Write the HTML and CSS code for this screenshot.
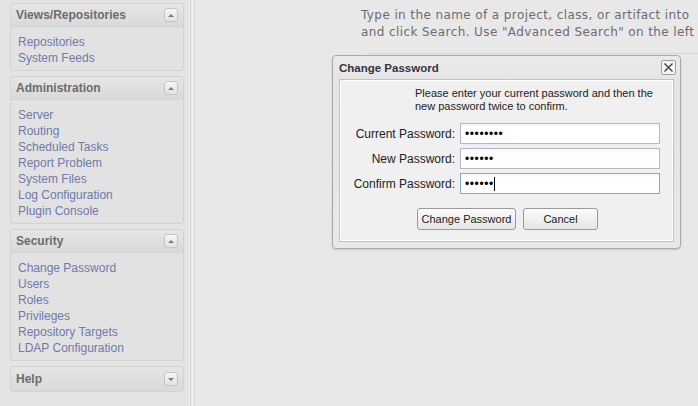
FILE: index.html
```html
<!DOCTYPE html>
<html>
<head>
<meta charset="utf-8">
<link rel="stylesheet" href="styles.css">
</head>
<body>
<div class="page">
  <aside class="sidebar">
    <section class="panel">
      <div class="panel-head"><span class="panel-title">Views/Repositories</span><span class="tool up"></span></div>
      <ul class="panel-body">
        <li><a>Repositories</a></li>
        <li><a>System Feeds</a></li>
      </ul>
    </section>
    <section class="panel">
      <div class="panel-head"><span class="panel-title">Administration</span><span class="tool up"></span></div>
      <ul class="panel-body">
        <li><a>Server</a></li>
        <li><a>Routing</a></li>
        <li><a>Scheduled Tasks</a></li>
        <li><a>Report Problem</a></li>
        <li><a>System Files</a></li>
        <li><a>Log Configuration</a></li>
        <li><a>Plugin Console</a></li>
      </ul>
    </section>
    <section class="panel">
      <div class="panel-head"><span class="panel-title">Security</span><span class="tool up"></span></div>
      <ul class="panel-body">
        <li><a>Change Password</a></li>
        <li><a>Users</a></li>
        <li><a>Roles</a></li>
        <li><a>Privileges</a></li>
        <li><a>Repository Targets</a></li>
        <li><a>LDAP Configuration</a></li>
      </ul>
    </section>
    <section class="panel collapsed">
      <div class="panel-head"><span class="panel-title">Help</span><span class="tool down"></span></div>
    </section>
  </aside>
  <main class="main">
    <p class="intro">Type in the name of a project, class, or artifact into<br>and click Search. Use "Advanced Search" on the left f</p>
    <div class="search-box"></div>
  </main>
</div>

<div class="dialog">
  <div class="dialog-head">
    <span class="dialog-title">Change Password</span>
    <span class="close">
      <svg width="11" height="11" viewBox="0 0 11 11"><path d="M1.5 1.5 L9.5 9.5 M9.5 1.5 L1.5 9.5" stroke="#444" stroke-width="1.4" fill="none"/></svg>
    </span>
  </div>
  <div class="dialog-body">
    <p class="msg">Please enter your current password and then the<br>new password twice to confirm.</p>
    <div class="form">
      <label class="lbl">Current Password:</label>
      <div class="field"><input type="password" value="12345678" readonly></div>
      <label class="lbl">New Password:</label>
      <div class="field"><input type="password" value="123456" readonly></div>
      <label class="lbl">Confirm Password:</label>
      <div class="field focus"><input type="password" value="123456" readonly><span class="caret"></span></div>
    </div>
    <div class="buttons">
      <button class="btn wide">Change Password</button>
      <button class="btn">Cancel</button>
    </div>
  </div>
</div>
</body>
</html>
```

FILE: styles.css
```css
html, body {
  margin: 0;
  padding: 0;
  height: 100%;
}
body {
  background: #e8e8e8;
  font-family: "Liberation Sans", Arial, sans-serif;
  overflow: hidden;
}
.page {
  display: flex;
  height: 406px;
}
.sidebar {
  flex: 0 0 179px;
  padding: 3px 0 0 10px;
  display: flex;
  flex-direction: column;
  gap: 5px;
  background: #e4e4e4;
  border-right: 1px solid #f2f2f2;
  box-shadow: 1px 0 0 #d2d2d2, 4px 0 0 #ececec, 5px 0 0 #d8d8d8;
  margin-right: 5px;
}
.panel {
  width: 172px;
  border: 1px solid #d2d2d2;
  border-radius: 3px;
  background: #e2e2e2;
}
.panel-head {
  height: 22px;
  border-bottom: 1px solid #d4d4d4;
  background: linear-gradient(#e6e6e6, #d9d9d9);
  display: flex;
  align-items: center;
  justify-content: space-between;
  padding: 0 5px 0 5px;
  border-radius: 3px 3px 0 0;
}
.collapsed .panel-head {
  border-bottom: none;
  height: 24px;
}
.panel-title {
  font-weight: bold;
  font-size: 12px;
  color: #6c6c6c;
}
.tool {
  width: 12px;
  height: 12px;
  border: 1px solid #c4c4c4;
  border-radius: 3px;
  background: linear-gradient(#f6f6f6, #e2e2e2);
  display: flex;
  align-items: center;
  justify-content: center;
}
.tool::after {
  content: "";
  width: 0;
  height: 0;
  border-left: 3px solid transparent;
  border-right: 3px solid transparent;
}
.tool.up::after {
  border-bottom: 3px solid #7a7a7a;
}
.tool.down::after {
  border-top: 3px solid #7a7a7a;
}
.panel-body {
  list-style: none;
  margin: 0;
  padding: 7px 0 4px 7px;
}
.panel-body li {
  line-height: 16px;
  font-size: 12px;
}
.panel-body a {
  color: #6f7aac;
}
.main {
  flex: 1 1 auto;
  min-width: 0;
  overflow: hidden;
}
.intro {
  margin: 7px 0 0 166px;
  font-family: "DejaVu Sans", Verdana, sans-serif;
  font-size: 12px;
  line-height: 17px;
  letter-spacing: 0.4px;
  color: #6e6a74;
  white-space: nowrap;
}
.search-box {
  margin: 12px 0 0 172px;
  border-top: 1px solid #d4d4d4;
}

/* dialog overlay */
.dialog {
  position: absolute;
  left: 332px;
  top: 55px;
  width: 335px;
  height: 186px;
  border: 1px solid #a9a9a9;
  border-radius: 4px;
  background: linear-gradient(#eaeaea, #e4e4e4 30px, #e8e8e8);
  box-shadow: 0 1px 2px rgba(0,0,0,0.15);
  display: flex;
  flex-direction: column;
  padding: 0 6px 6px 6px;
}
.dialog-head {
  height: 23px;
  display: flex;
  align-items: center;
  justify-content: space-between;
}
.dialog-title {
  font-weight: bold;
  font-size: 11.5px;
  color: #343444;
}
.close {
  width: 13px;
  height: 13px;
  border: 1px solid #a0a0a0;
  border-radius: 2px;
  background: #f4f4f4;
  display: flex;
  align-items: center;
  justify-content: center;
  margin-right: -2px;
}
.dialog-body {
  flex: 1;
  border: 1px solid #c2c2c2;
  box-shadow: inset 0 0 0 1px #ffffff;
  background: #f0f0f0;
  padding: 7px 0 0 0;
}
.msg {
  margin: 0 0 0 75px;
  font-size: 11px;
  line-height: 13px;
  color: #222;
}
.form {
  display: grid;
  grid-template-columns: 115px 200px;
  column-gap: 5px;
  row-gap: 4px;
  margin-top: 10px;
  align-items: center;
}
.lbl {
  text-align: right;
  font-size: 12px;
  color: #222;
}
.field {
  position: relative;
  height: 21px;
}
.field input {
  box-sizing: border-box;
  width: 200px;
  height: 21px;
  margin: 0;
  border: 1px solid #b5b8c8;
  background: linear-gradient(#f6f6f6, #ffffff 4px);
  padding: 0 4px;
  font-family: "Liberation Sans", Arial, sans-serif;
  font-size: 12px;
  letter-spacing: 0.6px;
  color: #000;
  outline: none;
}
.field.focus input {
  border-color: #7eadd9;
}
.caret {
  position: absolute;
  left: 34px;
  top: 4px;
  width: 1px;
  height: 14px;
  background: #000;
}
.buttons {
  display: flex;
  justify-content: center;
  gap: 7px;
  margin-top: 14px;
  padding-left: 2px;
}
.btn {
  height: 22px;
  width: 75px;
  border: 1px solid #9a9a9a;
  border-radius: 3px;
  background: linear-gradient(#fbfbfb, #e6e6e6);
  font-family: "Liberation Sans", Arial, sans-serif;
  font-size: 11px;
  color: #222;
  padding: 0;
}
.btn.wide {
  width: 99px;
}
```
